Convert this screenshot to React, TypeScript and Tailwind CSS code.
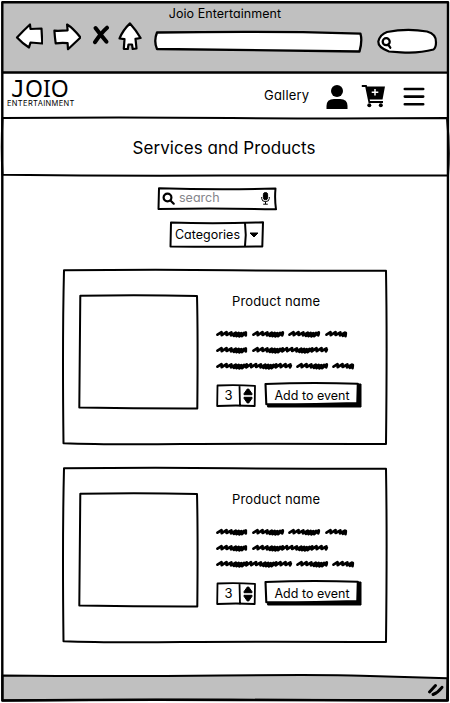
import React from "react";

function Ink({ w, h, d, fill = "none", sw = 2 }: { w: number; h: number; d: string; fill?: string; sw?: number }) {
  return (
    <svg className="pointer-events-none absolute top-0 left-0 overflow-visible" width={w} height={h} viewBox={`0 0 ${w} ${h}`} aria-hidden="true">
      <path d={d} fill={fill} stroke="#000" strokeWidth={sw} strokeLinejoin="round" strokeLinecap="round" />
    </svg>
  );
}

// One scribbled word: slanted zigzag strokes from x0 to x1 around a baseline.
function scribble(x0: number, x1: number, y: number) {
  const wobble = [0, -0.3, 0.2, 1, 1.6, 1.9, 1.5, 0.3];
  const steps = [5, 4.9, 4.4, 2.9, 2.6, 2.8, 2.7, 4.2];
  const end = x1 - 1.2;
  let x = x0 + 1.5;
  let d = `M${x} ${y + 0.7}`;
  let i = 0;
  while (x + 3 < x1) {
    const w = wobble[i % 8];
    d += `L${Math.min(x + 4, end)} ${y - 1.8 + w * 0.5}`;
    x += steps[i % 8];
    d += `L${Math.min(x - 0.8, end)} ${y + 1.2 + w * 0.6}`;
    i++;
  }
  return d + `L${end} ${y - 0.4}`;
}

const words: number[][] = [
  [0, 31, 4], [36, 68, 4], [72, 104, 4], [109, 131, 4],
  [0, 31, 20], [36, 112, 20],
  [0, 76, 36], [80, 112, 36], [116, 138, 36],
];

function Toolbar() {
  return (
    <div className="flex h-[48px] items-start pl-[14px]">
      <svg className="h-[28px] w-[28px]" viewBox="0 0 28 28" fill="#fff" stroke="#000" strokeWidth="2.2" strokeLinejoin="round">
        <path d="M2 14.5Q9 7 15 1.5L15.5 6L26.5 5.5L27.3 20.5L15.5 19.5L14 24.5Q7 20 2 14.5Z" />
      </svg>
      <svg className="ml-[10px] h-[28px] w-[28px]" viewBox="0 0 28 28" fill="#fff" stroke="#000" strokeWidth="2.2" strokeLinejoin="round">
        <path d="M1.4 7.7Q7 8 14.6 7.3L14.1 1.5Q20 5 27.5 14.5L15 26.2L14.6 20.2Q10 19.4 2.7 20.3Q1.8 14 1.4 7.7Z" />
      </svg>
      <svg className="mt-[2px] ml-[11px] h-[20px] w-[18px]" viewBox="0 0 18 20" fill="none" stroke="#000" strokeLinecap="round">
        <path d="M3.5 3Q8 9 14.5 16.7" strokeWidth="4" />
        <path d="M15 2.7Q9 8 3 17.2" strokeWidth="4" />
      </svg>
      <svg className="-mt-px ml-[8px] h-[30px] w-[24px]" viewBox="0 0 24 30" fill="#fff" stroke="#000" strokeWidth="2.2" strokeLinejoin="round">
        <path d="M12 1.4Q18 8 22.6 16L17.5 16.8L18.5 26.5L14.7 27L14 22.5L10.5 22.5L9.8 27L5.8 26.8L6.5 17.2L1.5 16.5Q5 8 12 1.4Z" />
      </svg>
      <div className="relative mt-[8px] ml-[11px] h-[22px] w-[210px]">
        <Ink w={210} h={22} fill="#fff" sw={2.3} d="M4 1.5Q80 .5 150 1.2L207.5 2.7Q209.5 10 206.5 20.5Q110 19.5 4 18Q.5 10 4 1.5Z" />
      </div>
      <div className="relative mt-[6px] ml-[14px] h-[24px] w-[60px]">
        <Ink w={60} h={24} fill="#fff" sw={2.2} d="M10 3Q30-.8 50 2.5Q59.5 5 59 13.5Q59 18.5 56.5 20.5Q42 24.5 24 23.3L12 22.5Q1 18.5 1.3 12.5Q3 5.5 10 3Z" />
        <Ink w={60} h={24} sw={2.3} d="M5.7 12.7a3.5 3.5 0 1 1 7 0a3.5 3.5 0 1 1-7 0M11.2 15.7L13.3 18.7" />
      </div>
    </div>
  );
}

function Logo() {
  return (
    <div className="mt-[3px] w-[70px]">
      <div className="flex h-[22px] items-baseline pl-[4px] font-['Noto_Sans',sans-serif] text-[23px] leading-[24px]">
        <span className="w-[14px] font-['DejaVu_Sans_Mono',monospace]">J</span>
        <span>OIO</span>
      </div>
      <div className="mt-[2px] text-[7.5px] leading-[8px] tracking-[0.35px]">ENTERTAINMENT</div>
    </div>
  );
}

function Header() {
  return (
    <header className="flex h-[45px] items-start pl-[6px]">
      <Logo />
      <div className="mt-[12px] ml-[187px] w-[46px] text-[13px] leading-[20px] tracking-[0.2px]">Gallery</div>
      <svg className="mt-[12px] ml-[16px] h-[24px] w-[22px]" viewBox="0 0 22 24">
        <ellipse cx="11" cy="6" rx="6" ry="6" />
        <path d="M.5 24V21Q.5 14 8 14H14Q21.5 14 21.5 21V24Z" />
      </svg>
      <svg className="mt-[11px] ml-[13px] h-[24px] w-[25px]" viewBox="0 0 25 24">
        <path d="M.8 2H5L8.3 18H22" fill="none" stroke="#000" strokeWidth="1.8" />
        <path d="M5 2.5H24L21.5 15.5H8Z" />
        <path d="M14 5V11.6M10.7 8.3H17.3" stroke="#fff" strokeWidth="1.5" />
        <circle cx="8.3" cy="21.3" r="2" /><circle cx="19.8" cy="21.3" r="2" />
      </svg>
      <svg className="mt-[14px] ml-[17px] h-[20px] w-[22px]" viewBox="0 0 22 20" stroke="#000" strokeWidth="2.6" strokeLinecap="round">
        <path d="M1.8 2H20.2M1.8 9.6H20.2M1.8 17.2H20.2" />
      </svg>
    </header>
  );
}

function ProductCard() {
  return (
    <article className="relative flex h-[176px] w-[326px] pt-[25px] pl-[16px]">
      <Ink w={326} h={176} d="M2 1.3Q90 .5 170 1.2T324 1.8Q325.2 70 324 175Q200 174.3 120 175T1.5 174.2Q.3 70 2 1.3Z" />
      <div className="relative h-[116px] w-[121px]">
        <Ink w={121} h={116} d="M2.3 1.8Q60 .6 119 2Q120 40 119.3 114.5Q60 114.6 1.3 113.5Q2 50 2.3 1.8Z" />
      </div>
      <div className="ml-[17px] flex w-[150px] flex-col">
        <div className="mt-[-3px] ml-[16px] text-[13px] leading-[20px] tracking-[0.15px] whitespace-nowrap">Product name</div>
        <svg className="mt-[19px] h-[42px] w-[140px]" viewBox="0 0 140 42" fill="none" stroke="#000" strokeWidth="2.7" strokeLinejoin="round" strokeLinecap="round">
          {words.map(([a, b, y]) => <path key={`${a}-${y}`} d={scribble(a, b, y)} />)}
        </svg>
        <div className="mt-[10px] flex items-start">
          <div className="relative mt-[2px] flex h-[24px] w-[40px]">
            <Ink w={40} h={24} sw={1.8} d="M1.5 1.5Q20 .8 39 1.8L38.7 22Q20 21 1.2 22ZM23.5 1.5L24 22" />
            <span className="w-[25px] text-center text-[13px] leading-[23px]">3</span>
            <svg className="ml-[2px] mt-[4px] h-[16px] w-[10px]" viewBox="0 0 10 16">
              <path d="M4.3 1H5.7L9 5.7V6.7H1V5.7ZM1 9.3H9V10.3L5.7 15H4.3L1 10.3Z" stroke="#000" strokeLinejoin="round" />
            </svg>
          </div>
          <button className="relative ml-[8px] h-[26px] w-[97px] text-[12.5px] leading-[23px] whitespace-nowrap">
            <Ink w={97} h={26} fill="#000" sw={1} d="M4 3L97 2V25H4Z" />
            <Ink w={97} h={26} fill="#fff" sw={2.1} d="M1.5 2Q45 .3 93.8 1.7L93.3 21Q45 22.5 2.3 22.3Z" />
            <span className="relative -left-[0.5px]">Add to event</span>
          </button>
        </div>
      </div>
    </article>
  );
}

export default function App() {
  return (
    <div className="relative flex h-[703px] w-[450px] flex-col overflow-hidden bg-white px-[1px] pt-[2px] font-[Inter,'Open_Sans',sans-serif] text-black [font-feature-settings:'cv11','ss03']">
      <div className="h-[71px] bg-[#c0c0c0]">
        <h1 className="h-[21px] pt-[2px] text-center text-[12.5px] leading-[20px] tracking-[0.05px]">Joio Entertainment</h1>
        <Toolbar />
      </div>
      <Header />
      <section className="relative flex h-[58px] items-center justify-center">
        <Ink w={448} h={58} d="M1.5 0Q120 -.8 230 0T446 0Q449 30 447 57.5Q330 57 220 57.5T1.5 56.7Q0 30 1.5 0Z" />
        <h2 className="mt-[1px] mr-[2px] text-[17px] leading-[24px] tracking-[0.05px]">Services and Products</h2>
      </section>
      <div className="relative mt-[11px] ml-[156px] flex h-[23px] w-[120px] items-center">
        <Ink w={120} h={23} d="M2 1.2Q60 3 118.5 1.5Q117.5 12 119 22.3Q60 21 1.5 22Z" />
        <svg className="ml-[5px] h-[13px] w-[13px]" viewBox="0 0 13 13" fill="none" stroke="#000" strokeWidth="2.2" strokeLinecap="round">
          <circle cx="5.5" cy="5.5" r="3.9" /><path d="M8.7 8.7L11.7 11.7" />
        </svg>
        <span className="ml-[4px] w-[82px] text-[12.5px] leading-[20px] text-[#85858b] -translate-y-px">search</span>
        <svg className="h-[13px] w-[9px]" viewBox="0 0 9 13" fill="none" stroke="#000" strokeWidth="1">
          <rect x="2.4" y=".5" width="4.2" height="7.2" rx="2" fill="#000" />
          <path d="M.7 5V6.5Q.7 9.6 4.5 9.6T8.3 6.5V5M4.5 9.5V12M2.2 12.2H6.8" />
        </svg>
      </div>
      <div className="relative mt-[11px] ml-[168px] flex h-[27px] w-[95px] items-center">
        <Ink w={95} h={27} d="M2 1.5Q45 3 94 1.3L93.3 25.5Q50 26 1.5 25.5Z" />
        <Ink w={95} h={27} d="M76 2Q77.5 14 76 25" />
        <span className="w-[77px] text-center text-[12.5px] leading-[20px]">Categories</span>
        <svg className="ml-[3px] h-[6px] w-[10px]" viewBox="0 0 10 6"><path d="M1 1H9L5 5Z" stroke="#000" strokeLinejoin="round" /></svg>
      </div>
      <main className="mt-[21px] ml-[61px] flex flex-col gap-[22px]">
        <ProductCard />
        <ProductCard />
      </main>
      <footer className="relative mt-[32px] h-[26px]">
        <Ink w={448} h={26} fill="#c0c0c0" d="M1.5 .5Q110 1.5 220 .5T360 .8L446.5 3.2L446 25.5Q350 25 230 24.8T1.5 25.5Z" />
        <Ink w={448} h={26} sw={3} d="M428.5 17L434.5 10.5M432 19.5Q437 17.5 441 12.3" />
      </footer>
      <Ink w={450} h={703} sw={2.4} d="M2.3 2.3Q230 1.8 448 2.2Q447.3 350 447.8 700.5Q350 700.7 240 700T2.3 700.5Q1.5 350 2.3 2.3ZM3 72.5Q220 73.2 447 72.6" />
    </div>
  );
}
